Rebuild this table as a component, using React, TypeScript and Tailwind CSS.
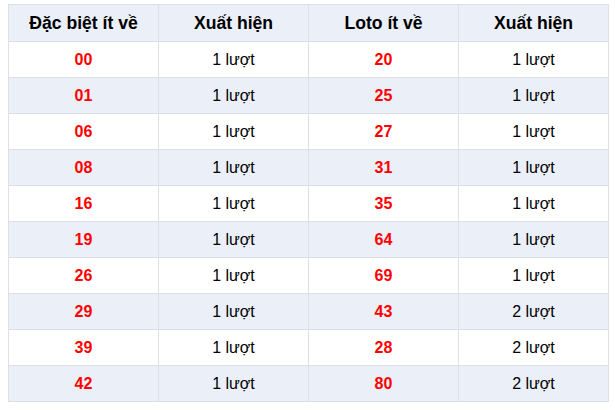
const rows = [
  ["00", "1 lượt", "20", "1 lượt"],
  ["01", "1 lượt", "25", "1 lượt"],
  ["06", "1 lượt", "27", "1 lượt"],
  ["08", "1 lượt", "31", "1 lượt"],
  ["16", "1 lượt", "35", "1 lượt"],
  ["19", "1 lượt", "64", "1 lượt"],
  ["26", "1 lượt", "69", "1 lượt"],
  ["29", "1 lượt", "43", "2 lượt"],
  ["39", "1 lượt", "28", "2 lượt"],
  ["42", "1 lượt", "80", "2 lượt"],
];

const headers = ["Đặc biệt ít về", "Xuất hiện", "Loto ít về", "Xuất hiện"];

export default function App() {
  return (
    <div className="bg-white pl-2 pt-[4px] w-[615px] h-[410px] font-['Liberation_Sans',Arial,sans-serif] text-[16px] text-black">
      <table className="w-[601px] border-collapse table-fixed text-center">
        <thead>
          <tr className="bg-[#eaeff8] h-[37px]">
            {headers.map((h, i) => (
              <th key={i} className="border border-[#dcdfe6] font-bold text-[17.6px]">
                {h}
              </th>
            ))}
          </tr>
        </thead>
        <tbody>
          {rows.map((r, i) => (
            <tr key={i} className={`h-[36px] ${i % 2 === 1 ? "bg-[#eaeff8]" : "bg-white"}`}>
              <td className="border border-[#dcdfe6] font-bold text-[#ff0000]">{r[0]}</td>
              <td className="border border-[#dcdfe6]">{r[1]}</td>
              <td className="border border-[#dcdfe6] font-bold text-[#ff0000]">{r[2]}</td>
              <td className="border border-[#dcdfe6]">{r[3]}</td>
            </tr>
          ))}
        </tbody>
      </table>
    </div>
  );
}
